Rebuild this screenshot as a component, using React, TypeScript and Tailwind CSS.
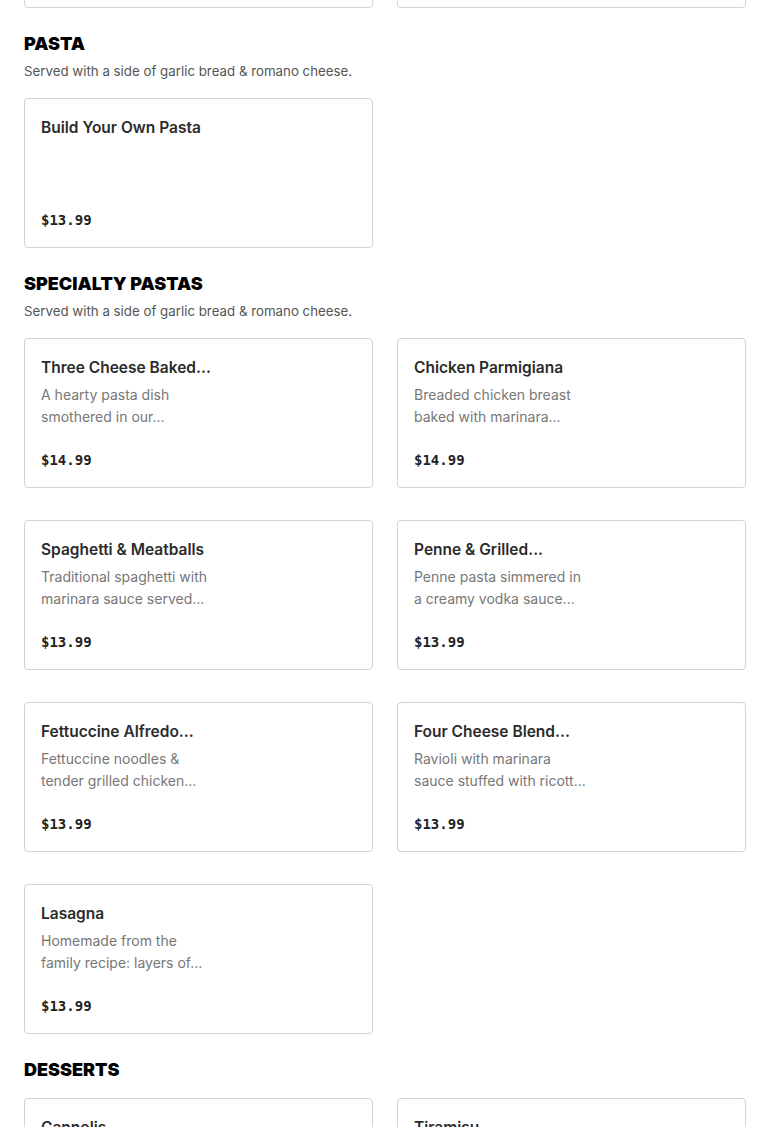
import React from "react"

type MenuItem = {
  name: string
  description?: string[]
  price: string
}

type Section = {
  title: string
  subtitle?: string
  items: MenuItem[]
}

const sections: Section[] = [
  {
    title: "PASTA",
    subtitle: "Served with a side of garlic bread & romano cheese.",
    items: [{ name: "Build Your Own Pasta", price: "$13.99" }],
  },
  {
    title: "SPECIALTY PASTAS",
    subtitle: "Served with a side of garlic bread & romano cheese.",
    items: [
      {
        name: "Three Cheese Baked...",
        description: ["A hearty pasta dish", "smothered in our..."],
        price: "$14.99",
      },
      {
        name: "Chicken Parmigiana",
        description: ["Breaded chicken breast", "baked with marinara..."],
        price: "$14.99",
      },
      {
        name: "Spaghetti & Meatballs",
        description: ["Traditional spaghetti with", "marinara sauce served..."],
        price: "$13.99",
      },
      {
        name: "Penne & Grilled...",
        description: ["Penne pasta simmered in", "a creamy vodka sauce..."],
        price: "$13.99",
      },
      {
        name: "Fettuccine Alfredo...",
        description: ["Fettuccine noodles &", "tender grilled chicken..."],
        price: "$13.99",
      },
      {
        name: "Four Cheese Blend...",
        description: ["Ravioli with marinara", "sauce stuffed with ricott..."],
        price: "$13.99",
      },
      {
        name: "Lasagna",
        description: ["Homemade from the", "family recipe: layers of..."],
        price: "$13.99",
      },
    ],
  },
  {
    title: "DESSERTS",
    items: [
      { name: "Cannolis", description: ["Crisp pastry shells", "filled with sweet..."], price: "$5.99" },
      { name: "Tiramisu", description: ["Espresso soaked", "ladyfingers layered..."], price: "$6.99" },
    ],
  },
]

const ItemCard = ({ item }: { item: MenuItem }) => {
  return (
    <div className="flex h-[150px] flex-col rounded border border-[#d3d3d3] bg-white px-4 pt-[17px] pb-[17px]">
      <p className="text-[15.5px] leading-6 font-semibold whitespace-nowrap text-[#2b2b2b]">
        {item.name}
      </p>
      {item.description && (
        <div className="mt-1 text-[14px] leading-[22px] whitespace-nowrap text-[#777]">
          {item.description.map((line) => (
            <p key={line}>{line}</p>
          ))}
        </div>
      )}
      <p className="mt-auto font-['DejaVu_Sans_Mono',monospace] text-[14px] leading-5 font-semibold text-[#222]">
        {item.price}
      </p>
    </div>
  )
}

export default function App() {
  return (
    <div className="min-h-screen overflow-hidden bg-white px-6 font-['Inter',sans-serif]">
      {/* tail of the previous section */}
      <div className="-mt-[142px] grid grid-cols-2 gap-x-6">
        <div className="h-[150px] rounded border border-[#d3d3d3]" />
        <div className="h-[150px] rounded border border-[#d3d3d3]" />
      </div>

      {sections.map((section) => (
        <section key={section.title} className="pt-6">
          <h2 className="text-[18px] leading-6 font-black text-black">{section.title}</h2>
          {section.subtitle && (
            <p className="mt-1 text-[13.3px] leading-[22px] text-[#555]">{section.subtitle}</p>
          )}
          <div className="mt-4 grid grid-cols-2 gap-x-6 gap-y-8">
            {section.items.map((item) => (
              <ItemCard key={item.name} item={item} />
            ))}
          </div>
        </section>
      ))}
    </div>
  )
}
